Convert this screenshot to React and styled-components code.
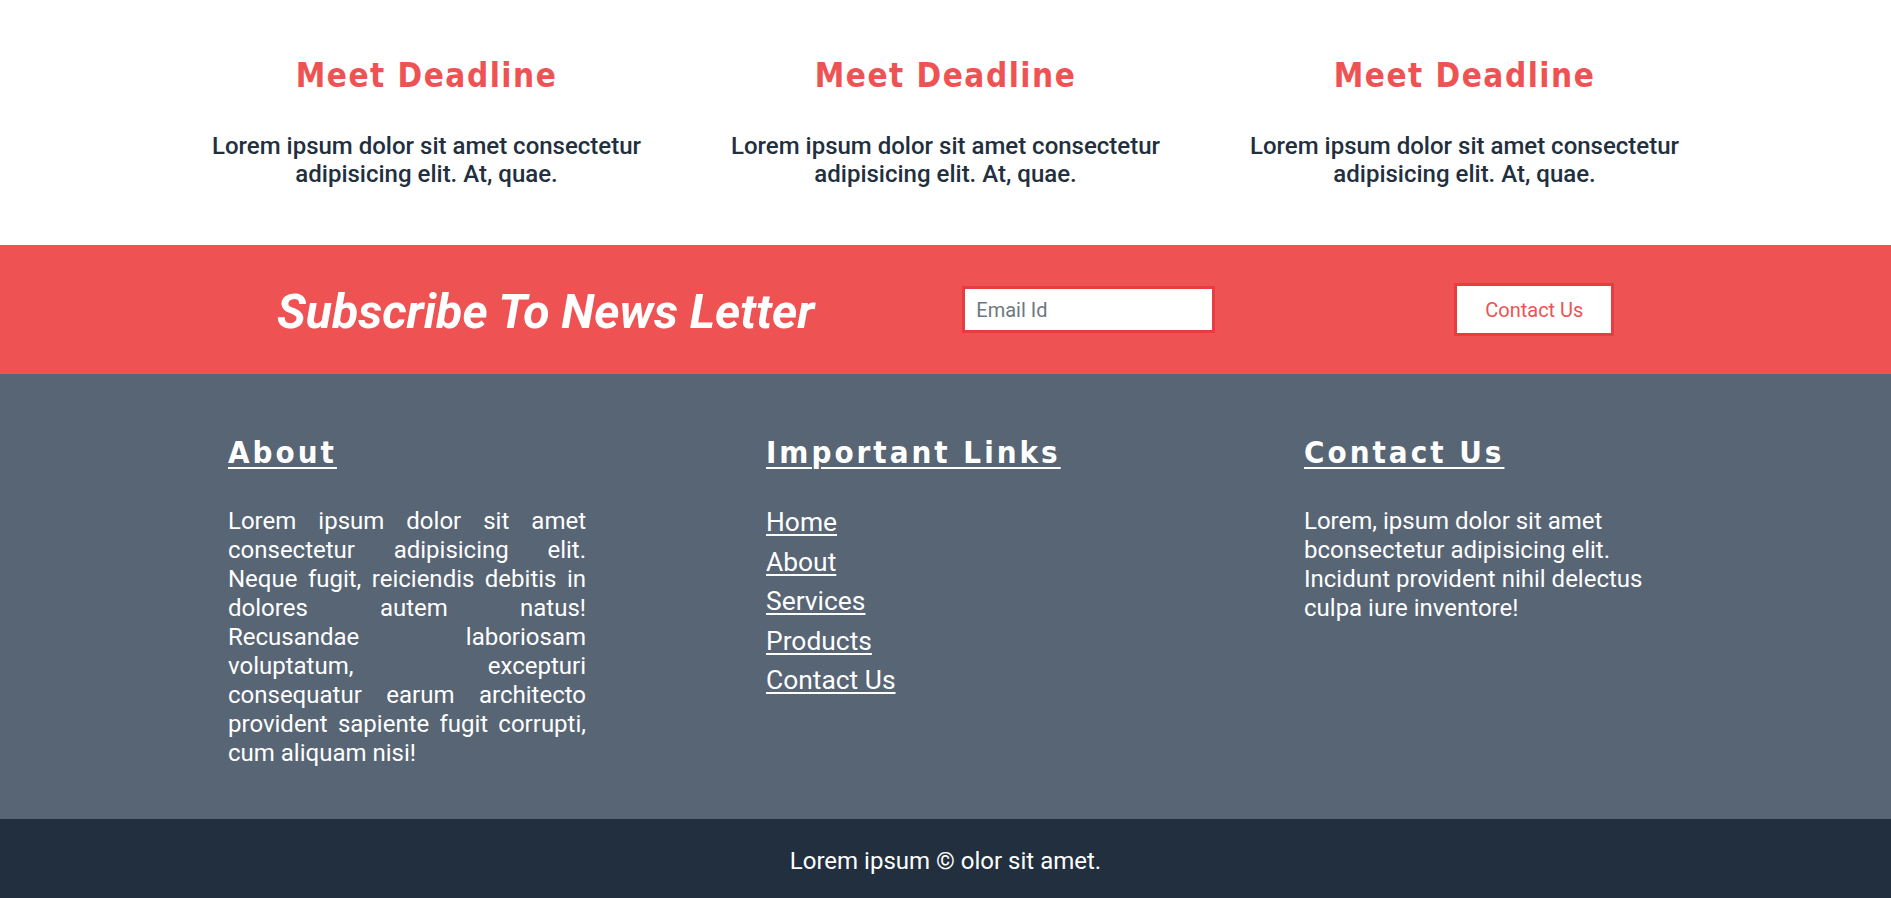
import React from "react";
import styled, { createGlobalStyle } from "styled-components";

const RED = "#ee5253";
const DARK = "#222f3e";
const SLATE = "#576574";

const GlobalStyle = createGlobalStyle`
  * { box-sizing: border-box; }
  body {
    margin: 0;
    font-family: Roboto, "Open Sans", sans-serif;
    background: #fff;
  }
`;

export const Features = styled.section`
  max-width: 1557px;
  margin: 0 auto;
  padding: 56px 0 57px;
  display: grid;
  grid-template-columns: repeat(3, 1fr);
`;

export const Feature = styled.div`
  padding: 0 20px;
  text-align: center;
`;

export const DisplayTitle = styled.h2`
  margin: 0;
  font-family: "DejaVu Sans Condensed", "DejaVu Sans", sans-serif;
  font-weight: 700;
  font-size: ${(p) => p.size || 33}px;
  line-height: ${(p) => p.lh || 40}px;
  letter-spacing: ${(p) => p.spacing || 1.5}px;
  color: ${(p) => p.color || RED};
  text-decoration: ${(p) => (p.underline ? "underline" : "none")};
  text-decoration-thickness: 2px;
  text-underline-offset: 4px;
`;

export const FeatureText = styled.p`
  margin: 36px 0 0;
  font-size: 24px;
  line-height: 28px;
  font-weight: 500;
  color: ${DARK};
`;

export const NewsBar = styled.section`
  height: 129px;
  background: ${RED};
  display: flex;
  align-items: center;
  padding-left: 277px;
`;

export const NewsTitle = styled.h2`
  margin: 0;
  font-size: 48.2px;
  line-height: 56px;
  padding-top: 4px;
  font-style: italic;
  font-weight: 700;
  color: #fff;
  white-space: nowrap;
`;

export const EmailInput = styled.input`
  margin-left: 148px;
  width: 253px;
  height: 47px;
  padding: 0 11px;
  border: 3px solid #e83d40;
  background: #fff;
  font-family: Roboto, sans-serif;
  font-size: 20px;
  color: ${DARK};
  outline: none;
  &::placeholder { color: #6f7780; }
`;

export const ContactButton = styled.button`
  margin-left: 239px;
  width: 160px;
  height: 53px;
  border: 3px solid #e83d40;
  background: #fff;
  font-family: Roboto, sans-serif;
  font-size: 20px;
  color: ${RED};
  cursor: pointer;
`;

export const FooterMain = styled.footer`
  background: ${SLATE};
  padding: 59px 228px 51px;
  display: grid;
  grid-template-columns: repeat(3, 358px);
  column-gap: 180px;
  color: #fff;
`;

export const FooterText = styled.p`
  margin: 36px 0 0;
  font-size: 24px;
  line-height: 29px;
  text-align: ${(p) => (p.justify ? "justify" : "left")};
`;

export const LinkList = styled.nav`
  margin-top: 32px;
  display: flex;
  flex-direction: column;
  align-items: flex-start;
`;

export const FooterLink = styled.a`
  font-size: 26.4px;
  line-height: 39.5px;
  color: #fff;
  text-decoration: underline;
  text-decoration-thickness: 2px;
  text-underline-offset: 3px;
`;

export const BottomBar = styled.div`
  background: ${DARK};
  padding: 28px 0 23px;
  text-align: center;
  color: #fff;
  font-size: 24px;
  line-height: 28px;
`;

const features = [1, 2, 3];
const links = ["Home", "About", "Services", "Products", "Contact Us"];

export default function App() {
  return (
    <>
      <GlobalStyle />
      <Features>
        {features.map((n) => (
          <Feature key={n}>
            <DisplayTitle>Meet Deadline</DisplayTitle>
            <FeatureText>
              Lorem ipsum dolor sit amet consectetur adipisicing elit. At, quae.
            </FeatureText>
          </Feature>
        ))}
      </Features>

      <NewsBar>
        <NewsTitle>Subscribe To News Letter</NewsTitle>
        <EmailInput type="email" placeholder="Email Id" />
        <ContactButton>Contact Us</ContactButton>
      </NewsBar>

      <FooterMain>
        <div>
          <DisplayTitle size={31} lh={38} spacing={3} color="#fff" underline>
            About
          </DisplayTitle>
          <FooterText justify>
            Lorem ipsum dolor sit amet consectetur adipisicing elit. Neque
            fugit, reiciendis debitis in dolores autem natus! Recusandae
            laboriosam voluptatum, excepturi consequatur earum architecto
            provident sapiente fugit corrupti, cum aliquam nisi!
          </FooterText>
        </div>
        <div>
          <DisplayTitle size={31} lh={38} spacing={3} color="#fff" underline>
            Important Links
          </DisplayTitle>
          <LinkList>
            {links.map((l) => (
              <FooterLink key={l} href="#">
                {l}
              </FooterLink>
            ))}
          </LinkList>
        </div>
        <div>
          <DisplayTitle size={31} lh={38} spacing={3} color="#fff" underline>
            Contact Us
          </DisplayTitle>
          <FooterText>
            Lorem, ipsum dolor sit amet bconsectetur adipisicing elit. Incidunt
            provident nihil delectus culpa iure inventore!
          </FooterText>
        </div>
      </FooterMain>

      <BottomBar>Lorem ipsum © olor sit amet.</BottomBar>
    </>
  );
}
